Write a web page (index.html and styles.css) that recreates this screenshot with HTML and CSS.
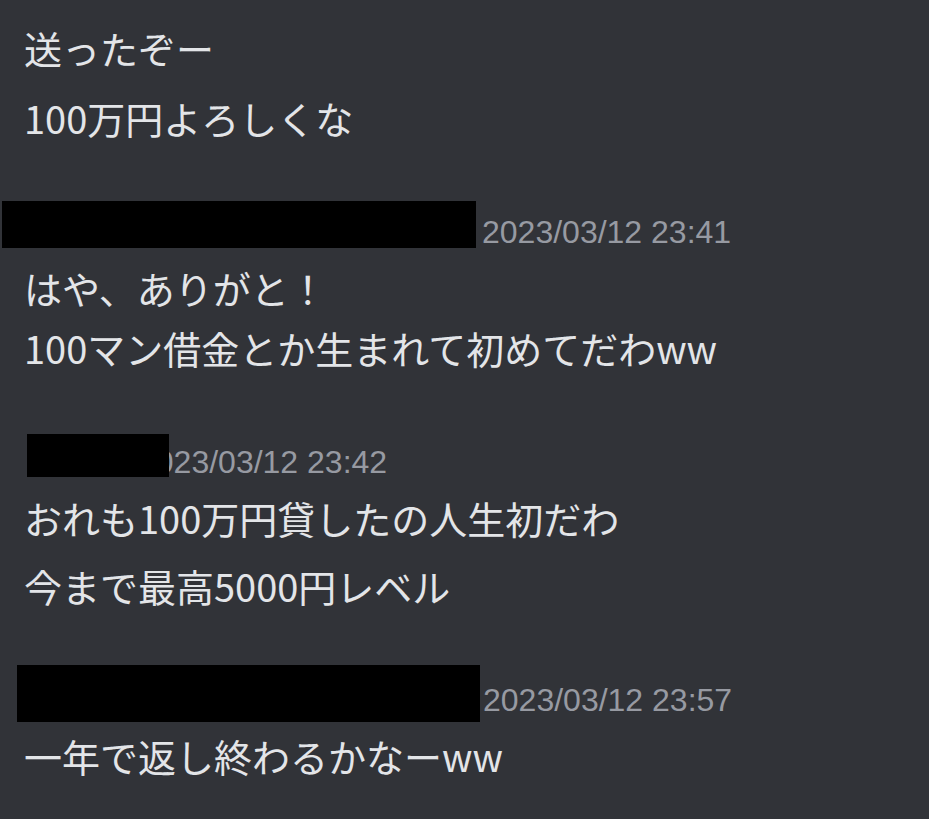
FILE: index.html
```html
<!DOCTYPE html>
<html lang="ja">
<head>
<meta charset="utf-8">
<title>chat</title>
<link rel="stylesheet" href="styles.css">
</head>
<body>
<main class="chat">
  <section class="group first">
    <p class="msg">送ったぞー</p>
    <p class="msg">100万円よろしくな</p>
  </section>

  <section class="group">
    <header class="head">
      <span class="redact r1"></span>
      <time class="ts">2023/03/12 23:41</time>
    </header>
    <div class="msg">はや、ありがと！<br>100マン借金とか生まれて初めてだわww</div>
  </section>

  <section class="group">
    <header class="head">
      <span class="redact r2"></span>
      <time class="ts">2023/03/12 23:42</time>
    </header>
    <p class="msg">おれも100万円貸したの人生初だわ</p>
    <p class="msg">今まで最高5000円レベル</p>
  </section>

  <section class="group">
    <header class="head">
      <span class="redact r3"></span>
      <time class="ts">2023/03/12 23:57</time>
    </header>
    <p class="msg">一年で返し終わるかなーww</p>
  </section>
</main>
</body>
</html>
```

FILE: styles.css
```css
html, body {
  margin: 0;
  padding: 0;
  background: #313338;
}

body {
  width: 929px;
  height: 819px;
  overflow: hidden;
  font-family: "Noto Sans CJK JP", "Noto Sans", sans-serif;
  color: #e3e5e8;
}

.chat {
  display: flex;
  flex-direction: column;
  padding-top: 18px;
}

.group {
  display: flex;
  flex-direction: column;
  margin-top: 58px;
}

.group.first {
  margin-top: 0;
}

.msg {
  margin: 0;
  padding-left: 24px;
  font-size: 38px;
  line-height: 60px;
  white-space: nowrap;
}

.msg + .msg {
  margin-top: 8px;
}

.first .msg + .msg {
  margin-top: 10px;
}

.head {
  display: flex;
  align-items: flex-start;
  height: 52px;
}

.ts {
  font-family: "Liberation Sans", Arial, sans-serif;
  font-size: 32px;
  line-height: 52px;
  color: #979aa2;
  white-space: nowrap;
}

.redact {
  display: block;
  background: #000;
  flex: none;
  position: relative;
  z-index: 1;
}

.r1 {
  margin-left: 2px;
  margin-top: -5px;
  width: 474px;
  height: 47px;
  margin-right: 6px;
}

.r2 {
  margin-left: 27px;
  margin-top: -2px;
  width: 142px;
  height: 43px;
  margin-right: -31px;
}

.r3 {
  margin-left: 17px;
  margin-top: -9px;
  width: 463px;
  height: 57px;
  margin-right: 3px;
}
```
